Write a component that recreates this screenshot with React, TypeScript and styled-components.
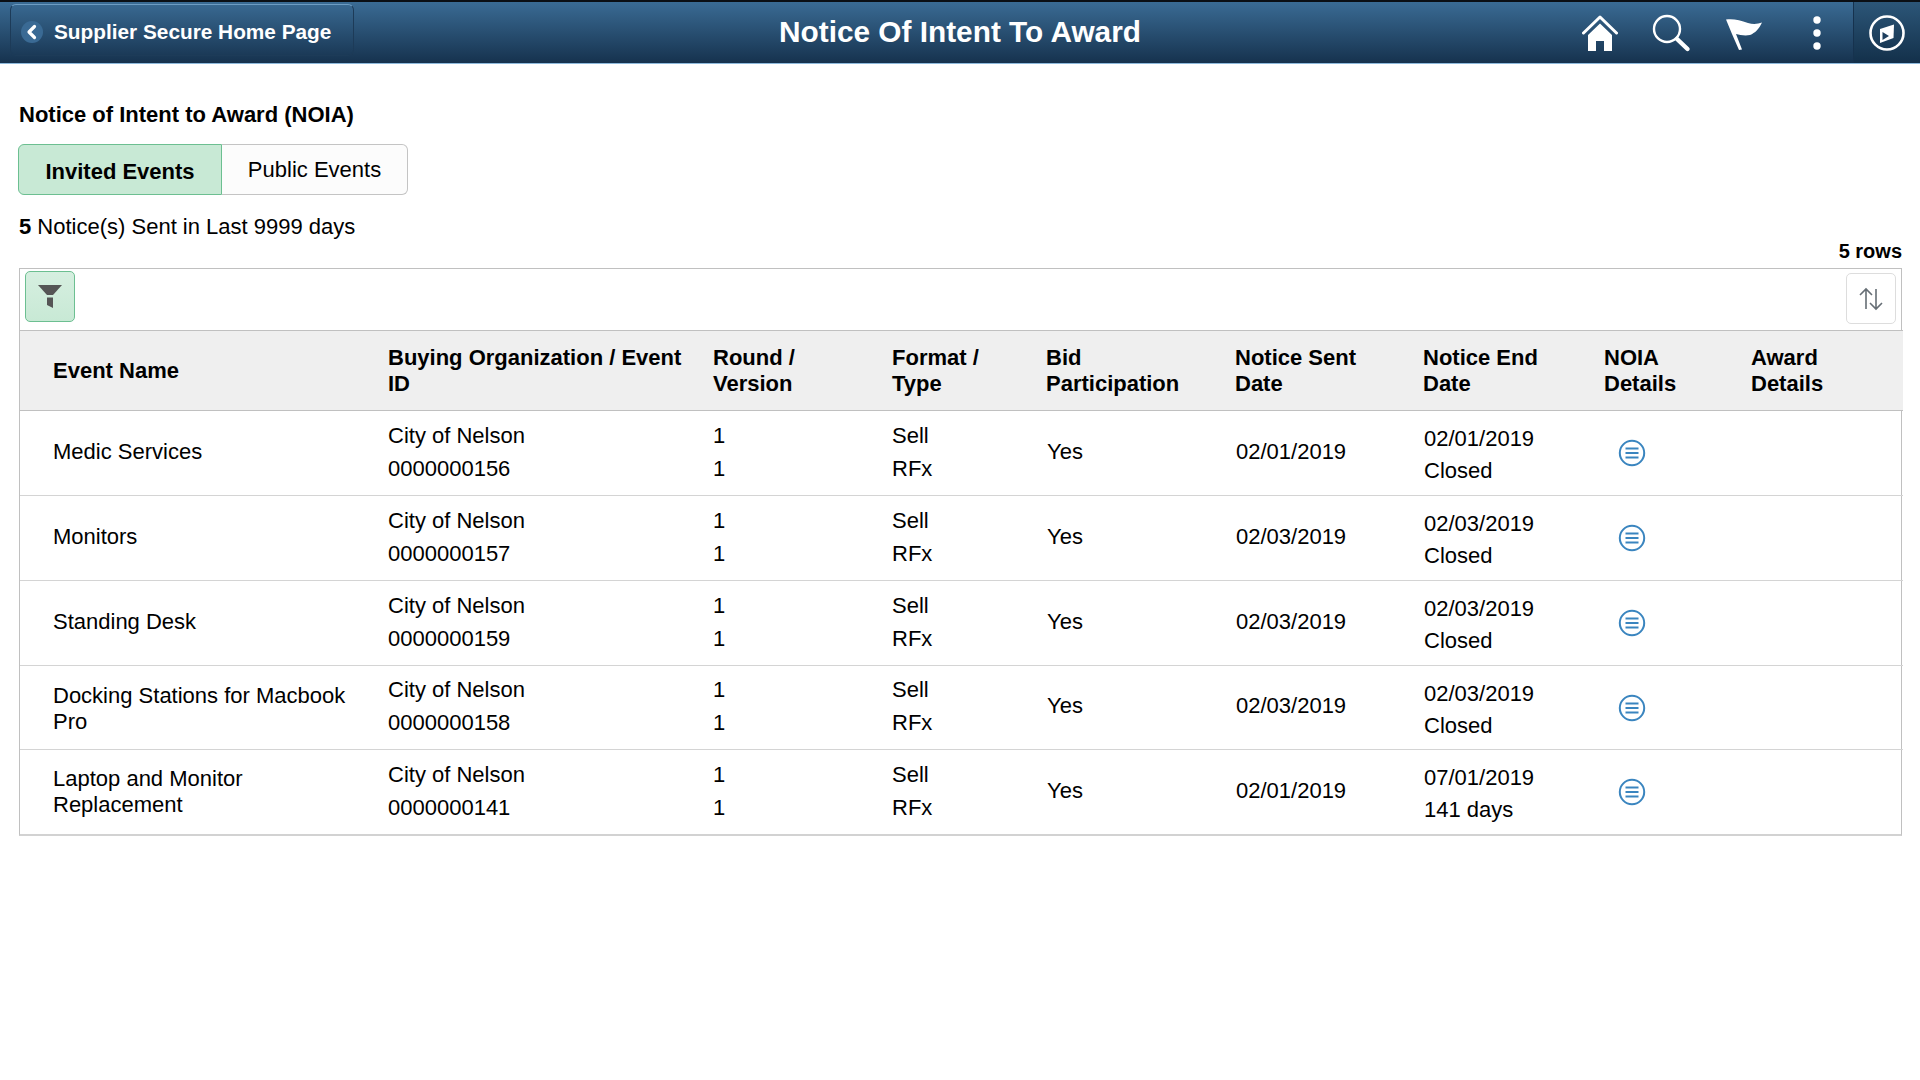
import React from "react";
import styled, { createGlobalStyle } from "styled-components";

const Global = createGlobalStyle`
  html, body { margin: 0; padding: 0; background: #fff; }
  body { font-family: "Liberation Sans", Arial, sans-serif; color: #000; }
`;

const Page = styled.div`
  width: 1920px;
  height: 1080px;
  overflow: hidden;
  background: #fff;
`;

const Banner = styled.header`
  box-sizing: border-box;
  height: 64px;
  display: grid;
  grid-template-columns: 1fr auto 1fr;
  align-items: stretch;
  border-top: 2px solid #0b0f14;
  border-bottom: 1px solid #8db9dc;
  background: linear-gradient(#3a6b94, #16324e);
`;

const BackButton = styled.a`
  box-sizing: border-box;
  justify-self: start;
  width: 344px;
  height: 52px;
  margin: 2px 0 0 10px;
  padding: 4px 0 0 10px;
  display: flex;
  align-items: center;
  gap: 11px;
  border: 1px solid #1d3b58;
  border-top-color: #6e9cc2;
  border-radius: 6px;
  color: #fff;
  font-size: 20.8px;
  font-weight: 700;
`;

const BackCircle = styled.span`
  width: 22px;
  height: 22px;
  border-radius: 50%;
  background: #3a6a94;
  display: flex;
  align-items: center;
  justify-content: center;
`;

const Title = styled.h1`
  margin: 0 0 2px;
  align-self: center;
  color: #fff;
  font-size: 29.8px;
  font-weight: 700;
  line-height: 58px;
`;

const Actions = styled.nav`
  justify-self: end;
  display: flex;
  align-items: stretch;
`;

const ActionIcon = styled.span<{ $w: number }>`
  width: ${(p) => p.$w}px;
  display: flex;
  align-items: center;
  justify-content: center;
`;

const CompassCell = styled.span`
  width: 66px;
  display: flex;
  align-items: center;
  justify-content: center;
  border-left: 1px solid #16324e;
  background: linear-gradient(#2c5678, #13304a);
`;

const Main = styled.main`
  padding: 0 18px 0 19px;
`;

const Heading = styled.h2`
  margin: 37px 0 0;
  font-size: 22px;
  font-weight: 700;
  line-height: 28px;
`;

const Toggle = styled.div`
  display: flex;
  width: 390px;
  height: 51px;
  margin: 15px 0 0 -1px;
  box-sizing: border-box;
`;

const ToggleItem = styled.div<{ $on?: boolean }>`
  box-sizing: border-box;
  flex: none;
  width: ${(p) => (p.$on ? 204 : 186)}px;
  display: flex;
  align-items: center;
  justify-content: center;
  font-size: 22px;
  font-weight: ${(p) => (p.$on ? 700 : 400)};
  padding-top: ${(p) => (p.$on ? 4 : 0)}px;
  background: ${(p) => (p.$on ? "#c8e9d5" : "#fcfcfc")};
  border: 1px solid ${(p) => (p.$on ? "#6cbf91" : "#c4c4c4")};
  border-left-width: ${(p) => (p.$on ? 1 : 0)}px;
  border-radius: ${(p) => (p.$on ? "6px 0 0 6px" : "0 6px 6px 0")};
`;

const Summary = styled.div`
  margin-top: 18px;
  font-size: 22px;
  line-height: 28px;
`;

const RowCount = styled.div`
  margin-top: -1px;
  font-size: 20px;
  font-weight: 700;
  line-height: 22px;
  text-align: right;
`;

const Grid = styled.section`
  margin-top: 6px;
  border: 1px solid #c0c0c0;
  border-bottom: 2px solid #d2d2d2;
`;

const Toolbar = styled.div`
  box-sizing: border-box;
  height: 61px;
  padding: 2px 5px 0 5px;
  display: flex;
  justify-content: space-between;
  align-items: flex-start;
`;

const FilterButton = styled.button`
  box-sizing: border-box;
  width: 50px;
  height: 51px;
  padding: 0;
  display: flex;
  align-items: center;
  justify-content: center;
  border: 1px solid #6cbf91;
  border-radius: 5px;
  background: linear-gradient(#d6efe0, #c8e9d5);
`;

const SortButton = styled.button`
  box-sizing: border-box;
  width: 50px;
  height: 51px;
  margin-top: 2px;
  padding: 0;
  display: flex;
  align-items: center;
  justify-content: center;
  border: 1px solid #dddddd;
  border-radius: 5px;
  background: #fff;
`;

const Table = styled.table`
  width: 100%;
  table-layout: fixed;
  border-collapse: separate;
  border-spacing: 0;
  font-size: 22px;
`;

const HeadCell = styled.th<{ $first?: boolean }>`
  box-sizing: border-box;
  height: 81px;
  padding: 0 20px 0 ${(p) => (p.$first ? 33 : 0)}px;
  background: #efefef;
  border-top: 1px solid #c0c0c0;
  border-bottom: 1px solid #c0c0c0;
  text-align: left;
  vertical-align: middle;
  font-weight: 700;
  line-height: 26px;
`;

const Cell = styled.td<{ $left?: number; $lift?: number; $drop?: number }>`
  box-sizing: border-box;
  height: 85px;
  padding: ${(p) => p.$drop ?? 0}px 20px ${(p) => p.$lift ?? 0}px ${(p) => p.$left ?? 0}px;
  border-bottom: 1px solid #d4d4d4;
  vertical-align: middle;
  line-height: 26px;
  tr:nth-child(4) & {
    height: 84px;
  }
  tr:last-child & {
    height: 84px;
    border-bottom: 0;
  }
`;

const Stack = styled.div<{ $down?: boolean }>`
  line-height: ${(p) => (p.$down ? 32 : 33)}px;
  padding-top: ${(p) => (p.$down ? 4 : 0)}px;
  padding-bottom: ${(p) => (p.$down ? 0 : 3)}px;
`;

const Line = styled.div``;

const DetailLink = styled.a`
  display: flex;
  padding: 0 0 0 14px;
`;

const Home = () => (
  <svg width="36" height="36" viewBox="0 0 36 36">
    <path d="M1.5 18 18 2 34.5 18" fill="none" stroke="#fff" strokeWidth="3" strokeLinecap="round" strokeLinejoin="round" />
    <path d="M6 20 18 8.5 30 20V36H22V26H14V36H6Z" fill="#fff" />
  </svg>
);

const Search = () => (
  <svg width="40" height="40" viewBox="0 0 40 40" fill="none" stroke="#fff">
    <circle cx="15" cy="16" r="13" strokeWidth="2.4" />
    <path d="M25 26 35.5 36" strokeWidth="4.4" strokeLinecap="round" />
  </svg>
);

const Flag = () => (
  <svg width="37" height="36" viewBox="0 -4 37 36">
    <path d="M0 0.5C7 -0.5 14 1 22 4 27 5.500 32 5 36 3.500 33 10 29 14 24 16 19 17 14 16 10 15L16 30.500 13 31 6 15Z" fill="#fff" />
  </svg>
);

const Dots = () => (
  <svg width="8" height="34" viewBox="0 0 8 34" fill="#fff">
    <circle cx="4" cy="4" r="3.700" />
    <circle cx="4" cy="17" r="3.700" />
    <circle cx="4" cy="30" r="3.700" />
  </svg>
);

const Compass = () => (
  <svg width="38" height="38" viewBox="0 0 38 38">
    <circle cx="19" cy="19" r="16.500" fill="none" stroke="#fff" strokeWidth="2.600" />
    <path d="M12 15 26 10.500 25.500 24 12 29Z" fill="#fff" />
    <path d="M14.500 18 21 22 14.500 26Z" fill="#1e3f5e" />
  </svg>
);

const Funnel = () => (
  <svg width="26" height="24" viewBox="0 0 26 24" fill="#555">
    <path d="M1 0H25L16 10H10Z" />
    <path d="M10 12.500H16V23L10 20Z" />
  </svg>
);

const SortArrows = () => (
  <svg width="26" height="24" viewBox="0 0 26 24" fill="none" stroke="#666e75" strokeWidth="1.600">
    <path d="M8 22V2M2 8 8 2 14 8" />
    <path d="M18 2V22M12 16 18 22 24 16" />
  </svg>
);

const Details = () => (
  <svg width="28" height="28" viewBox="0 0 28 28" fill="none" stroke="#3a85bf">
    <circle cx="14" cy="14" r="12.200" strokeWidth="2" />
    <path d="M7.500 9.500H20.500M7.500 14H20.500M7.500 18.500H20.500" strokeWidth="2" />
  </svg>
);

const columns = [368, 325, 179, 154, 189, 188, 181, 147, 152];
const heads = [
  "Event Name",
  "Buying Organization / Event ID",
  "Round / Version",
  "Format / Type",
  "Bid Participation",
  "Notice Sent Date",
  "Notice End Date",
  "NOIA Details",
  "Award Details",
];

const rows = [
  { name: "Medic Services", lift: 2, drop: 0, id: "0000000156", sent: "02/01/2019", end: "02/01/2019", state: "Closed" },
  { name: "Monitors", lift: 2, drop: 0, id: "0000000157", sent: "02/03/2019", end: "02/03/2019", state: "Closed" },
  { name: "Standing Desk", lift: 2, drop: 0, id: "0000000159", sent: "02/03/2019", end: "02/03/2019", state: "Closed" },
  { name: "Docking Stations for Macbook Pro", lift: 0, drop: 2, id: "0000000158", sent: "02/03/2019", end: "02/03/2019", state: "Closed" },
  { name: "Laptop and Monitor Replacement", lift: 0, drop: 0, id: "0000000141", sent: "02/01/2019", end: "07/01/2019", state: "141 days" },
];

export default function App() {
  return (
    <Page>
      <Global />
      <Banner>
        <BackButton>
          <BackCircle>
            <svg width="12" height="16" viewBox="0 0 12 16" fill="none" stroke="#fff" strokeWidth="3.200" strokeLinecap="round" strokeLinejoin="round">
              <path d="M8.500 2.500 3 8 8.500 13.500" />
            </svg>
          </BackCircle>
          Supplier Secure Home Page
        </BackButton>
        <Title>Notice Of Intent To Award</Title>
        <Actions>
          <ActionIcon $w={71}><Home /></ActionIcon>
          <ActionIcon $w={73}><Search /></ActionIcon>
          <ActionIcon $w={72}><Flag /></ActionIcon>
          <ActionIcon $w={73}><Dots /></ActionIcon>
          <CompassCell><Compass /></CompassCell>
        </Actions>
      </Banner>
      <Main>
        <Heading>Notice of Intent to Award (NOIA)</Heading>
        <Toggle>
          <ToggleItem $on>Invited Events</ToggleItem>
          <ToggleItem>Public Events</ToggleItem>
        </Toggle>
        <Summary><b>5</b> Notice(s) Sent in Last 9999 days</Summary>
        <RowCount>5 rows</RowCount>
        <Grid>
          <Toolbar>
            <FilterButton><Funnel /></FilterButton>
            <SortButton><SortArrows /></SortButton>
          </Toolbar>
          <Table>
            <colgroup>
              {columns.map((w, i) => (
                <col key={i} width={w} />
              ))}
            </colgroup>
            <thead>
              <tr>
                {heads.map((h, i) => (
                  <HeadCell key={h} $first={i === 0}>{h}</HeadCell>
                ))}
              </tr>
            </thead>
            <tbody>
              {rows.map((r) => (
                <tr key={r.id}>
                  <Cell $left={33} $lift={r.lift} $drop={r.drop}>{r.name}</Cell>
                  <Cell><Stack><Line>City of Nelson</Line><Line>{r.id}</Line></Stack></Cell>
                  <Cell><Stack><Line>1</Line><Line>1</Line></Stack></Cell>
                  <Cell><Stack><Line>Sell</Line><Line>RFx</Line></Stack></Cell>
                  <Cell $left={1} $lift={3}>Yes</Cell>
                  <Cell $left={1} $lift={3}>{r.sent}</Cell>
                  <Cell $left={1}><Stack $down><Line>{r.end}</Line><Line>{r.state}</Line></Stack></Cell>
                  <Cell><DetailLink><Details /></DetailLink></Cell>
                  <Cell />
                </tr>
              ))}
            </tbody>
          </Table>
        </Grid>
      </Main>
    </Page>
  );
}
